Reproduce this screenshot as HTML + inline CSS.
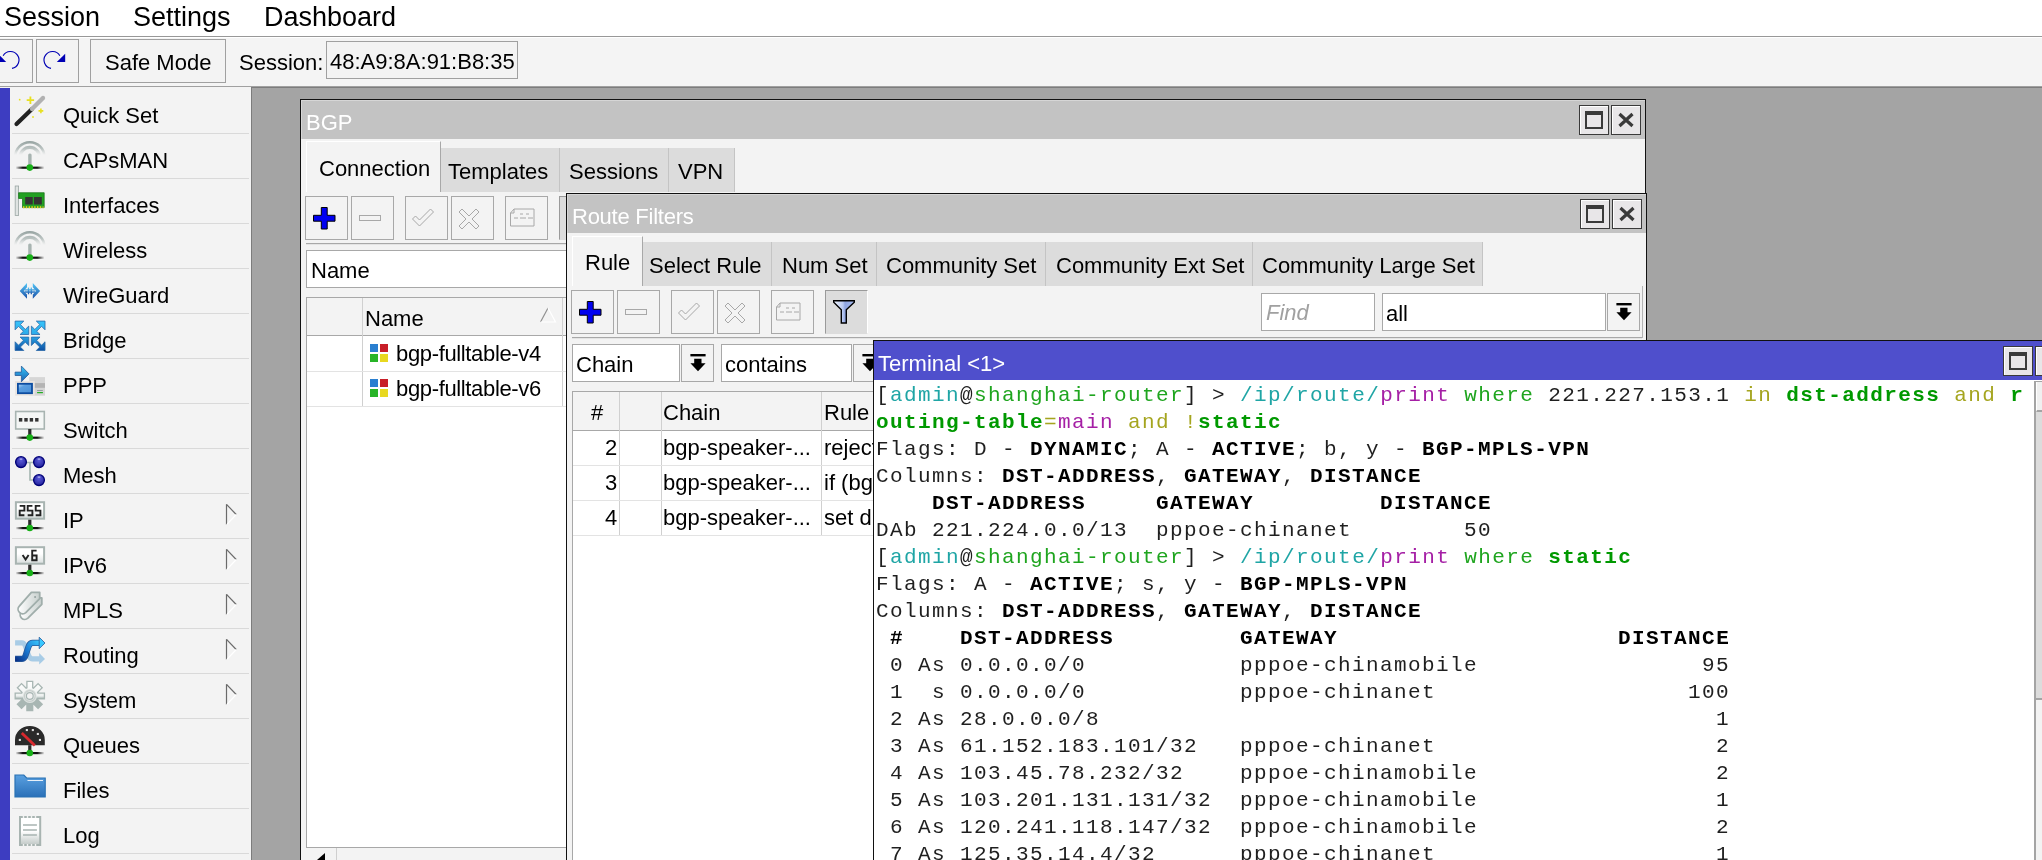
<!DOCTYPE html><html><head><meta charset="utf-8"><style>
html,body{margin:0;padding:0;}
body{width:2042px;height:860px;overflow:hidden;position:relative;background:#a4a4a4;font-family:"Liberation Sans", sans-serif;}
.t{position:absolute;white-space:pre;line-height:1;will-change:transform;}
.r{position:absolute;box-sizing:border-box;}
svg{position:absolute;overflow:visible;}
</style></head><body>
<div class="r" style="left:0px;top:0px;width:2042px;height:36px;background:#ffffff;"></div>
<div class="r" style="left:0px;top:36px;width:2042px;height:1px;background:#989898;"></div>
<div class="t" style="left:3.5px;top:4.0px;font-size:27px;color:#000;font-weight:400;font-family:'Liberation Sans', sans-serif;">Session</div>
<div class="t" style="left:132.5px;top:4.0px;font-size:27px;color:#000;font-weight:400;font-family:'Liberation Sans', sans-serif;">Settings</div>
<div class="t" style="left:264.0px;top:4.0px;font-size:27px;color:#000;font-weight:400;font-family:'Liberation Sans', sans-serif;">Dashboard</div>
<div class="r" style="left:0px;top:37px;width:2042px;height:49px;background:#f4f4f4;"></div>
<div class="r" style="left:0px;top:37px;width:2042px;height:1px;background:#ffffff;"></div>
<div class="r" style="left:0px;top:86px;width:2042px;height:1px;background:#a0a0a0;"></div>
<div class="r" style="left:-5px;top:39px;width:38px;height:44px;border:1px solid #a0a0a0;background:#f3f3f3;"></div>
<div class="r" style="left:36px;top:39px;width:43px;height:44px;border:1px solid #a0a0a0;background:#f3f3f3;"></div>
<svg style="left:0;top:0" width="80" height="90" viewBox="0 0 80 90"><path d="M12 68.4 A8.5 8.5 0 1 0 3.14 55.75" fill="none" stroke="#0000b4" stroke-width="1.15"/><path d="M-2.2 53.7 L-2.2 62 L6.2 62 Z" fill="#0000b4"/><path d="M51 68.4 A8.5 8.5 0 1 1 59.86 55.75" fill="none" stroke="#0000b4" stroke-width="1.15"/><path d="M65.2 53.7 L65.2 62 L56.8 62 Z" fill="#0000b4"/></svg>
<div class="r" style="left:90px;top:39px;width:136px;height:44px;border:1px solid #a0a0a0;background:#f3f3f3;"></div>
<div class="t" style="left:105.2px;top:51.5px;font-size:22px;color:#000;font-weight:400;font-family:'Liberation Sans', sans-serif;">Safe Mode</div>
<div class="t" style="left:239.1px;top:51.5px;font-size:22px;color:#000;font-weight:400;font-family:'Liberation Sans', sans-serif;">Session:</div>
<div class="r" style="left:326px;top:41px;width:192px;height:38px;border:1px solid #a0a0a0;background:#f3f3f3;"></div>
<div class="t" style="left:329.5px;top:51.0px;font-size:22px;color:#000;font-weight:400;font-family:'Liberation Sans', sans-serif;">48:A9:8A:91:B8:35</div>
<div class="r" style="left:251px;top:87px;width:1791px;height:1px;background:#7c7c7c;"></div>
<div class="r" style="left:251px;top:87px;width:1px;height:773px;background:#7c7c7c;"></div>
<div class="r" style="left:0px;top:87px;width:251px;height:773px;background:#f3f3f3;"></div>
<div class="r" style="left:0px;top:88px;width:10px;height:772px;background:#3d3dc1;"></div>
<div class="r" style="left:12px;top:133px;width:237px;height:1px;background:#d9d9d9;"></div>
<div class="t" style="left:63.2px;top:105.0px;font-size:22px;color:#000;font-weight:400;font-family:'Liberation Sans', sans-serif;">Quick Set</div>
<div class="r" style="left:12px;top:178px;width:237px;height:1px;background:#d9d9d9;"></div>
<div class="t" style="left:63.2px;top:150.0px;font-size:22px;color:#000;font-weight:400;font-family:'Liberation Sans', sans-serif;">CAPsMAN</div>
<div class="r" style="left:12px;top:223px;width:237px;height:1px;background:#d9d9d9;"></div>
<div class="t" style="left:63.2px;top:195.0px;font-size:22px;color:#000;font-weight:400;font-family:'Liberation Sans', sans-serif;">Interfaces</div>
<div class="r" style="left:12px;top:268px;width:237px;height:1px;background:#d9d9d9;"></div>
<div class="t" style="left:63.2px;top:240.0px;font-size:22px;color:#000;font-weight:400;font-family:'Liberation Sans', sans-serif;">Wireless</div>
<div class="r" style="left:12px;top:313px;width:237px;height:1px;background:#d9d9d9;"></div>
<div class="t" style="left:63.2px;top:285.0px;font-size:22px;color:#000;font-weight:400;font-family:'Liberation Sans', sans-serif;">WireGuard</div>
<div class="r" style="left:12px;top:358px;width:237px;height:1px;background:#d9d9d9;"></div>
<div class="t" style="left:63.2px;top:330.0px;font-size:22px;color:#000;font-weight:400;font-family:'Liberation Sans', sans-serif;">Bridge</div>
<div class="r" style="left:12px;top:403px;width:237px;height:1px;background:#d9d9d9;"></div>
<div class="t" style="left:63.2px;top:375.0px;font-size:22px;color:#000;font-weight:400;font-family:'Liberation Sans', sans-serif;">PPP</div>
<div class="r" style="left:12px;top:448px;width:237px;height:1px;background:#d9d9d9;"></div>
<div class="t" style="left:63.2px;top:420.0px;font-size:22px;color:#000;font-weight:400;font-family:'Liberation Sans', sans-serif;">Switch</div>
<div class="r" style="left:12px;top:493px;width:237px;height:1px;background:#d9d9d9;"></div>
<div class="t" style="left:63.2px;top:465.0px;font-size:22px;color:#000;font-weight:400;font-family:'Liberation Sans', sans-serif;">Mesh</div>
<div class="r" style="left:12px;top:538px;width:237px;height:1px;background:#d9d9d9;"></div>
<div class="t" style="left:63.2px;top:510.0px;font-size:22px;color:#000;font-weight:400;font-family:'Liberation Sans', sans-serif;">IP</div>
<svg style="left:222px;top:496px" width="20" height="34" viewBox="0 0 20 34"><path d="M4.5 8.3 V28.8" stroke="#6a6a6a" stroke-width="1.2" fill="none"/><path d="M4.5 8.3 L14.2 18.5" stroke="#6a6a6a" stroke-width="1.2" fill="none"/><path d="M14.2 18.5 L4.5 28.8" stroke="#ffffff" stroke-width="1.2" fill="none"/></svg>
<div class="r" style="left:12px;top:583px;width:237px;height:1px;background:#d9d9d9;"></div>
<div class="t" style="left:63.2px;top:555.0px;font-size:22px;color:#000;font-weight:400;font-family:'Liberation Sans', sans-serif;">IPv6</div>
<svg style="left:222px;top:541px" width="20" height="34" viewBox="0 0 20 34"><path d="M4.5 8.3 V28.8" stroke="#6a6a6a" stroke-width="1.2" fill="none"/><path d="M4.5 8.3 L14.2 18.5" stroke="#6a6a6a" stroke-width="1.2" fill="none"/><path d="M14.2 18.5 L4.5 28.8" stroke="#ffffff" stroke-width="1.2" fill="none"/></svg>
<div class="r" style="left:12px;top:628px;width:237px;height:1px;background:#d9d9d9;"></div>
<div class="t" style="left:63.2px;top:600.0px;font-size:22px;color:#000;font-weight:400;font-family:'Liberation Sans', sans-serif;">MPLS</div>
<svg style="left:222px;top:586px" width="20" height="34" viewBox="0 0 20 34"><path d="M4.5 8.3 V28.8" stroke="#6a6a6a" stroke-width="1.2" fill="none"/><path d="M4.5 8.3 L14.2 18.5" stroke="#6a6a6a" stroke-width="1.2" fill="none"/><path d="M14.2 18.5 L4.5 28.8" stroke="#ffffff" stroke-width="1.2" fill="none"/></svg>
<div class="r" style="left:12px;top:673px;width:237px;height:1px;background:#d9d9d9;"></div>
<div class="t" style="left:63.2px;top:645.0px;font-size:22px;color:#000;font-weight:400;font-family:'Liberation Sans', sans-serif;">Routing</div>
<svg style="left:222px;top:631px" width="20" height="34" viewBox="0 0 20 34"><path d="M4.5 8.3 V28.8" stroke="#6a6a6a" stroke-width="1.2" fill="none"/><path d="M4.5 8.3 L14.2 18.5" stroke="#6a6a6a" stroke-width="1.2" fill="none"/><path d="M14.2 18.5 L4.5 28.8" stroke="#ffffff" stroke-width="1.2" fill="none"/></svg>
<div class="r" style="left:12px;top:718px;width:237px;height:1px;background:#d9d9d9;"></div>
<div class="t" style="left:63.2px;top:690.0px;font-size:22px;color:#000;font-weight:400;font-family:'Liberation Sans', sans-serif;">System</div>
<svg style="left:222px;top:676px" width="20" height="34" viewBox="0 0 20 34"><path d="M4.5 8.3 V28.8" stroke="#6a6a6a" stroke-width="1.2" fill="none"/><path d="M4.5 8.3 L14.2 18.5" stroke="#6a6a6a" stroke-width="1.2" fill="none"/><path d="M14.2 18.5 L4.5 28.8" stroke="#ffffff" stroke-width="1.2" fill="none"/></svg>
<div class="r" style="left:12px;top:763px;width:237px;height:1px;background:#d9d9d9;"></div>
<div class="t" style="left:63.2px;top:735.0px;font-size:22px;color:#000;font-weight:400;font-family:'Liberation Sans', sans-serif;">Queues</div>
<div class="r" style="left:12px;top:808px;width:237px;height:1px;background:#d9d9d9;"></div>
<div class="t" style="left:63.2px;top:780.0px;font-size:22px;color:#000;font-weight:400;font-family:'Liberation Sans', sans-serif;">Files</div>
<div class="r" style="left:12px;top:853px;width:237px;height:1px;background:#d9d9d9;"></div>
<div class="t" style="left:63.2px;top:825.0px;font-size:22px;color:#000;font-weight:400;font-family:'Liberation Sans', sans-serif;">Log</div>
<svg style="left:10px;top:88px" width="45" height="45" viewBox="0 0 45 45"><path d="M6.5 36 L22 21" stroke="#222" stroke-width="4.2" stroke-linecap="round"/><path d="M22 21 L33 10" stroke="#c8c8c8" stroke-width="4.2" stroke-linecap="round"/><path d="M22 21 L33 10" stroke="#888" stroke-width="4.2" stroke-opacity="0.35" stroke-linecap="round"/><path d="M20.4 8.5 V16 M16.7 12.2 H24.1" stroke="#e8e020" stroke-width="1.8"/><path d="M30.9 20.5 V25.3 M28.5 22.9 H33.3" stroke="#e8e020" stroke-width="1.6"/><circle cx="9.7" cy="11.7" r="0.9" fill="#e8e020"/><circle cx="23" cy="29" r="0.9" fill="#e8e020"/></svg>
<svg style="left:10px;top:133px" width="45" height="45" viewBox="0 0 45 45"><defs><linearGradient id="arc1" gradientUnits="userSpaceOnUse" x1="0" y1="7" x2="0" y2="22"><stop offset="0" stop-color="#8e9c9a" stop-opacity="1"/><stop offset="0.6" stop-color="#a4b0ae" stop-opacity="0.7"/><stop offset="1" stop-color="#c0c8c6" stop-opacity="0"/></linearGradient></defs><path d="M5.3 23.7 A14.5 14.5 0 0 1 34.3 23.7" fill="none" stroke="url(#arc1)" stroke-width="2.6"/><path d="M10 24.2 A9.8 9.8 0 0 1 29.6 24.2" fill="none" stroke="url(#arc1)" stroke-width="3.2"/><rect x="18.2" y="20.5" width="3.4" height="14" rx="1.5" fill="#a8b4b1"/><defs><linearGradient id="ln1" x1="0" x2="1"><stop offset="0" stop-color="#000" stop-opacity="0"/><stop offset="0.25" stop-color="#111"/><stop offset="0.75" stop-color="#111"/><stop offset="1" stop-color="#000" stop-opacity="0"/></linearGradient></defs><rect x="18.2" y="34" width="3.2" height="0.6000000000000014" fill="#a8b4b1"/><rect x="5.5" y="33.6" width="29" height="2.2" fill="url(#ln1)"/><circle cx="19.8" cy="34.6" r="3.3" fill="#18b018"/></svg>
<svg style="left:10px;top:178px" width="45" height="45" viewBox="0 0 45 45"><rect x="5.2" y="8" width="3.4" height="29.4" fill="#dfe3e2" stroke="#9aa5a3" stroke-width="0.8"/><path d="M8.6 14.7 H34.2 V29.6 H12.5 V20.5 H8.6 Z" fill="#22a022" stroke="#137013" stroke-width="0.7"/><rect x="15.2" y="19" width="7.5" height="7.5" fill="#333"/><rect x="24" y="19" width="7.8" height="7.5" fill="#333"/><path d="M13 29.3 H33.5" stroke="#e6d21a" stroke-width="2" stroke-dasharray="1.4 1.4"/></svg>
<svg style="left:10px;top:223px" width="45" height="45" viewBox="0 0 45 45"><defs><linearGradient id="arc3" gradientUnits="userSpaceOnUse" x1="0" y1="7" x2="0" y2="22"><stop offset="0" stop-color="#8e9c9a" stop-opacity="1"/><stop offset="0.6" stop-color="#a4b0ae" stop-opacity="0.7"/><stop offset="1" stop-color="#c0c8c6" stop-opacity="0"/></linearGradient></defs><path d="M5.3 23.7 A14.5 14.5 0 0 1 34.3 23.7" fill="none" stroke="url(#arc3)" stroke-width="2.6"/><path d="M10 24.2 A9.8 9.8 0 0 1 29.6 24.2" fill="none" stroke="url(#arc3)" stroke-width="3.2"/><rect x="18.2" y="20.5" width="3.4" height="14" rx="1.5" fill="#a8b4b1"/><defs><linearGradient id="ln3" x1="0" x2="1"><stop offset="0" stop-color="#000" stop-opacity="0"/><stop offset="0.25" stop-color="#111"/><stop offset="0.75" stop-color="#111"/><stop offset="1" stop-color="#000" stop-opacity="0"/></linearGradient></defs><rect x="18.2" y="34" width="3.2" height="0.6000000000000014" fill="#a8b4b1"/><rect x="5.5" y="33.6" width="29" height="2.2" fill="url(#ln3)"/><circle cx="19.8" cy="34.6" r="3.3" fill="#18b018"/></svg>
<svg style="left:10px;top:268px" width="45" height="45" viewBox="0 0 45 45"><defs><linearGradient id="wg4" x1="0" y1="0" x2="0" y2="1"><stop offset="0" stop-color="#55c8f8"/><stop offset="1" stop-color="#1a50a8"/></linearGradient></defs><path d="M17 15 L9.7 22.9 L17 30.7 V26.5 L13.7 22.9 L17 19.3 Z" fill="url(#wg4)"/><path d="M22.8 15 L30.1 22.9 L22.8 30.7 V26.5 L26.1 22.9 L22.8 19.3 Z" fill="url(#wg4)"/><path d="M14.5 21.8 H25.3 M14.5 24 H25.3 M18.5 19.5 V26.3 M21.3 19.5 V26.3" stroke="url(#wg4)" stroke-width="1.3"/></svg>
<svg style="left:10px;top:313px" width="45" height="45" viewBox="0 0 45 45"><defs><linearGradient id="br5" gradientUnits="userSpaceOnUse" x1="0" y1="8" x2="0" y2="38"><stop offset="0" stop-color="#38c4fa"/><stop offset="0.5" stop-color="#2aa8e8"/><stop offset="1" stop-color="#0c4ca0"/></linearGradient><linearGradient id="bb5" gradientUnits="userSpaceOnUse" x1="0" y1="37.6" x2="0" y2="7.6"><stop offset="0" stop-color="#38c4fa"/><stop offset="0.5" stop-color="#2aa8e8"/><stop offset="1" stop-color="#0c4ca0"/></linearGradient></defs><g transform=""><path d="M5.1 8.1 L13.8 8.1 L10.37 11.53 L15.3 16.46 L18.75 13.1 L18.75 21.5 L10.1 21.5 L13.45 18.3 L8.53 13.37 L5.1 16.8 Z" fill="url(#br5)" stroke="#2a68a8" stroke-width="0.8" stroke-linejoin="miter"/></g><g transform="translate(40.12,0) scale(-1,1)"><path d="M5.1 8.1 L13.8 8.1 L10.37 11.53 L15.3 16.46 L18.75 13.1 L18.75 21.5 L10.1 21.5 L13.45 18.3 L8.53 13.37 L5.1 16.8 Z" fill="url(#br5)" stroke="#2a68a8" stroke-width="0.8" stroke-linejoin="miter"/></g><g transform="translate(0,45.6) scale(1,-1)"><path d="M5.1 8.1 L13.8 8.1 L10.37 11.53 L15.3 16.46 L18.75 13.1 L18.75 21.5 L10.1 21.5 L13.45 18.3 L8.53 13.37 L5.1 16.8 Z" fill="url(#bb5)" stroke="#2a68a8" stroke-width="0.8" stroke-linejoin="miter"/></g><g transform="translate(40.12,45.6) scale(-1,-1)"><path d="M5.1 8.1 L13.8 8.1 L10.37 11.53 L15.3 16.46 L18.75 13.1 L18.75 21.5 L10.1 21.5 L13.45 18.3 L8.53 13.37 L5.1 16.8 Z" fill="url(#bb5)" stroke="#2a68a8" stroke-width="0.8" stroke-linejoin="miter"/></g></svg>
<svg style="left:10px;top:358px" width="45" height="45" viewBox="0 0 45 45"><defs><linearGradient id="pp6" x1="0" y1="0" x2="0" y2="1"><stop offset="0" stop-color="#38c8fa"/><stop offset="1" stop-color="#1a60b0"/></linearGradient><linearGradient id="ps6" x1="0" y1="0" x2="1" y2="1"><stop offset="0" stop-color="#a8d0f8"/><stop offset="0.3" stop-color="#5a9ee0"/><stop offset="1" stop-color="#4a90d8"/></linearGradient></defs><rect x="19.3" y="19.1" width="15.7" height="18.6" fill="#d6d6d6"/><rect x="19.3" y="25.1" width="15.7" height="4.7" fill="#b4b4b4"/><path d="M27.1 32.5 H32.9" stroke="#8a9896" stroke-width="0.9"/><path d="M27.1 34.6 H32.9" stroke="#22b022" stroke-width="1.2"/><rect x="5.1" y="23" width="19.7" height="14.7" fill="#e8e4e0"/><rect x="7" y="24.9" width="15.9" height="11.2" fill="#0c4ca0"/><rect x="8.8" y="26.7" width="12.3" height="7.6" fill="url(#ps6)"/><path d="M5.1 14.1 H11.4 V8.1 L19 15.9 L11.4 23.8 V17.5 H5.1 Z" fill="url(#pp6)" stroke="#2a5a98" stroke-width="0.8"/></svg>
<svg style="left:10px;top:403px" width="45" height="45" viewBox="0 0 45 45"><rect x="5.7" y="8.5" width="28.6" height="17.5" fill="#f4f6f5" stroke="#a8b4b1" stroke-width="1.6"/><rect x="8.9" y="15" width="3.4" height="3.6" fill="#333"/><rect x="14.3" y="15" width="3.4" height="3.6" fill="#333"/><rect x="19.7" y="15" width="3.4" height="3.6" fill="#333"/><rect x="25.1" y="15" width="3.4" height="3.6" fill="#333"/><defs><linearGradient id="ln7" x1="0" x2="1"><stop offset="0" stop-color="#000" stop-opacity="0"/><stop offset="0.25" stop-color="#111"/><stop offset="0.75" stop-color="#111"/><stop offset="1" stop-color="#000" stop-opacity="0"/></linearGradient></defs><rect x="18.2" y="26" width="3.2" height="8.600000000000001" fill="#2a2a2a"/><rect x="5.5" y="33.6" width="29" height="2.2" fill="url(#ln7)"/><circle cx="19.8" cy="34.6" r="3.3" fill="#18b018"/></svg>
<svg style="left:10px;top:448px" width="45" height="45" viewBox="0 0 45 45"><path d="M15 14.5 H25 M20 14.5 V32 H25" stroke="#a8b8b4" stroke-width="1.7" fill="none"/><defs><radialGradient id="ms8" cx="0.5" cy="0.35" r="0.6"><stop offset="0" stop-color="#5a5ad8"/><stop offset="1" stop-color="#2626a0"/></radialGradient></defs><circle cx="11" cy="14.1" r="5.4" fill="url(#ms8)" stroke="#000078" stroke-width="1.3"/><ellipse cx="11" cy="11.1" rx="1.6" ry="0.9" fill="#b8b8f0" opacity="0.8"/><circle cx="29" cy="14.1" r="5.4" fill="url(#ms8)" stroke="#000078" stroke-width="1.3"/><ellipse cx="29" cy="11.1" rx="1.6" ry="0.9" fill="#b8b8f0" opacity="0.8"/><circle cx="29" cy="32.1" r="5.4" fill="url(#ms8)" stroke="#000078" stroke-width="1.3"/><ellipse cx="29" cy="29.1" rx="1.6" ry="0.9" fill="#b8b8f0" opacity="0.8"/></svg>
<svg style="left:10px;top:493px" width="45" height="45" viewBox="0 0 45 45"><defs><linearGradient id="sg9" x1="0" y1="0" x2="0" y2="1"><stop offset="0.4" stop-color="#ffffff"/><stop offset="1" stop-color="#d8dedd"/></linearGradient></defs><rect x="5.9" y="9.2" width="28.2" height="16.5" fill="url(#sg9)" stroke="#a8b4b1" stroke-width="2"/><path d="M9.7 12.9 H14.399999999999999 V17.6 H9.7 V22.3 H14.399999999999999 M22.4 12.9 H17.7 V17.6 H22.4 V22.3 H17.7 M30.4 12.9 H25.7 V17.6 H30.4 V22.3 H25.7 " fill="none" stroke="#222" stroke-width="1.9"/><defs><linearGradient id="ln9" x1="0" x2="1"><stop offset="0" stop-color="#000" stop-opacity="0"/><stop offset="0.25" stop-color="#111"/><stop offset="0.75" stop-color="#111"/><stop offset="1" stop-color="#000" stop-opacity="0"/></linearGradient></defs><rect x="18.2" y="26.7" width="3.2" height="8.3" fill="#2a2a2a"/><rect x="5.5" y="34" width="29" height="2.2" fill="url(#ln9)"/><circle cx="19.8" cy="35" r="3.3" fill="#18b018"/></svg>
<svg style="left:10px;top:538px" width="45" height="45" viewBox="0 0 45 45"><defs><linearGradient id="sg10" x1="0" y1="0" x2="0" y2="1"><stop offset="0.4" stop-color="#ffffff"/><stop offset="1" stop-color="#d8dedd"/></linearGradient></defs><rect x="5.9" y="9.2" width="28.2" height="16.5" fill="url(#sg10)" stroke="#a8b4b1" stroke-width="2"/><path d="M12.6 17 L15.6 21.6 L18.6 17" fill="none" stroke="#222" stroke-width="1.9"/><path d="M26.6 12.6 H22.2 V22.2 H26.6 V17.5 H22.2" fill="none" stroke="#222" stroke-width="1.9"/><defs><linearGradient id="ln10" x1="0" x2="1"><stop offset="0" stop-color="#000" stop-opacity="0"/><stop offset="0.25" stop-color="#111"/><stop offset="0.75" stop-color="#111"/><stop offset="1" stop-color="#000" stop-opacity="0"/></linearGradient></defs><rect x="18.2" y="26.7" width="3.2" height="8.3" fill="#2a2a2a"/><rect x="5.5" y="34" width="29" height="2.2" fill="url(#ln10)"/><circle cx="19.8" cy="35" r="3.3" fill="#18b018"/></svg>
<svg style="left:10px;top:583px" width="45" height="45" viewBox="0 0 45 45"><defs><linearGradient id="mp11" x1="0" y1="0" x2="1" y2="0"><stop offset="0" stop-color="#ffffff"/><stop offset="1" stop-color="#c8d0ce"/></linearGradient></defs><path transform="translate(2.1,5.6)" d="M21.4 9.3 H29.7 V15.7 L15.8 29.6 A4.6 4.6 0 0 1 9.3 23.1 Z" fill="url(#mp11)" stroke="#a0aeab" stroke-width="1.8" stroke-linejoin="round"/><path transform="translate(0,0)" d="M21.4 9.3 H29.7 V15.7 L15.8 29.6 A4.6 4.6 0 0 1 9.3 23.1 Z" fill="url(#mp11)" stroke="#a0aeab" stroke-width="1.8" stroke-linejoin="round"/><rect x="24.3" y="13.2" width="1.6" height="1.6" fill="#8a9896"/></svg>
<svg style="left:10px;top:628px" width="45" height="45" viewBox="0 0 45 45"><defs><linearGradient id="rt12" gradientUnits="userSpaceOnUse" x1="5" y1="33" x2="30" y2="13"><stop offset="0" stop-color="#082a80"/><stop offset="0.5" stop-color="#1a78d0"/><stop offset="1" stop-color="#38c8ff"/></linearGradient></defs><path d="M5.1 14.9 H12 C17.5 14.9 16.5 30.9 22.5 30.9 H29.8" fill="none" stroke="#a8cce6" stroke-width="5.2"/><path d="M29.2 25 L35 30.9 L29.2 36.6 Z" fill="#a8cce6"/><path d="M5.1 30.9 H12 C17.5 30.9 16.5 14.9 22.5 14.9 H29.8" fill="none" stroke="#2a5a9a" stroke-width="6.2"/><path d="M5.1 30.9 H12 C17.5 30.9 16.5 14.9 22.5 14.9 H29.8" fill="none" stroke="url(#rt12)" stroke-width="4.6"/><path d="M29.2 9.2 L35 15 L29.2 20.7 Z" fill="#38c8ff" stroke="#2a5a9a" stroke-width="0.8"/></svg>
<svg style="left:10px;top:673px" width="45" height="45" viewBox="0 0 45 45"><defs><linearGradient id="gr13" gradientUnits="userSpaceOnUse" x1="0" y1="8" x2="0" y2="38"><stop offset="0" stop-color="#ffffff"/><stop offset="0.5" stop-color="#eef1f0"/><stop offset="0.58" stop-color="#a8b6b3"/><stop offset="1" stop-color="#a8b6b3"/></linearGradient><radialGradient id="gh13" cx="0.5" cy="0.5" r="0.5"><stop offset="0.5" stop-color="#ffffff"/><stop offset="0.75" stop-color="#c4ccca"/><stop offset="1" stop-color="#e8ecea"/></radialGradient></defs><path d="M16.90 14.90 L16.90 8.38 L22.70 8.38 L22.70 14.90 L23.47 15.22 L28.08 10.61 L32.19 14.72 L27.58 19.33 L27.90 20.10 L34.42 20.10 L34.42 25.90 L27.90 25.90 L27.58 26.67 L32.19 31.28 L28.08 35.39 L23.47 30.78 L22.70 31.10 L22.70 37.62 L16.90 37.62 L16.90 31.10 L16.13 30.78 L11.52 35.39 L7.41 31.28 L12.02 26.67 L11.70 25.90 L5.18 25.90 L5.18 20.10 L11.70 20.10 L12.02 19.33 L7.41 14.72 L11.52 10.61 L16.13 15.22 Z" fill="url(#gr13)" stroke="#a8b6b3" stroke-width="1.3" stroke-linejoin="miter"/><circle cx="19.8" cy="23" r="7" fill="url(#gh13)"/><circle cx="19.8" cy="23" r="3.4" fill="#f3f3f3" stroke="#a8b6b3" stroke-width="1.2"/></svg>
<svg style="left:10px;top:718px" width="45" height="45" viewBox="0 0 45 45"><path d="M5 27.2 V22 A14.9 14 0 0 1 34.8 22 V27.2 Z" fill="#2a2a2a"/><rect x="8.8" y="20.9" width="2.1" height="2.1" fill="#ddd"/><rect x="15.8" y="11" width="2.1" height="2.1" fill="#ddd"/><rect x="21.8" y="11" width="2.1" height="2.1" fill="#ddd"/><rect x="26.8" y="14.9" width="2.1" height="2.1" fill="#ddd"/><rect x="28.9" y="20.9" width="2.1" height="2.1" fill="#ddd"/><path d="M11.8 14.9 L24.8 27.6" stroke="#d8282e" stroke-width="2.8"/><defs><linearGradient id="ln14" x1="0" x2="1"><stop offset="0" stop-color="#000" stop-opacity="0"/><stop offset="0.25" stop-color="#111"/><stop offset="0.75" stop-color="#111"/><stop offset="1" stop-color="#000" stop-opacity="0"/></linearGradient></defs><rect x="18.2" y="27.2" width="3.2" height="7.800000000000001" fill="#2a2a2a"/><rect x="5.5" y="34" width="29" height="2.2" fill="url(#ln14)"/><circle cx="19.8" cy="35" r="3.3" fill="#18b018"/></svg>
<svg style="left:10px;top:763px" width="45" height="45" viewBox="0 0 45 45"><defs><linearGradient id="fl15" x1="0" y1="0" x2="0" y2="1"><stop offset="0" stop-color="#5aa0e0"/><stop offset="1" stop-color="#2a70b8"/></linearGradient></defs><path d="M5 12 H13.8 L16.6 15 H35.2 V34 H5 Z" fill="url(#fl15)" stroke="#2a72b4" stroke-width="1.2"/><path d="M17.5 17.5 H33" stroke="#e8f0f8" stroke-width="1"/></svg>
<svg style="left:10px;top:808px" width="45" height="45" viewBox="0 0 45 45"><defs><linearGradient id="lg16" x1="0" y1="0" x2="0" y2="1"><stop offset="0.5" stop-color="#ffffff"/><stop offset="1" stop-color="#c0c8c6"/></linearGradient></defs><rect x="10" y="9" width="20.2" height="28" fill="url(#lg16)" stroke="#a8b4b1" stroke-width="2"/><path d="M12.8 9 H14.2 M16.8 9 H18.2 M20.8 9 H22.2 M24.8 9 H26.2 M12.8 37 H14.2 M16.8 37 H18.2 M20.8 37 H22.2 M24.8 37 H26.2" stroke="#f3f3f3" stroke-width="2.2"/><path d="M13 17 H26.9 M13 21.9 H26.9 M13 26.9 H26.9" stroke="#a8b4b1" stroke-width="1.5"/></svg>
<div class="r" style="left:300px;top:99px;width:1346px;height:771px;border:1px solid #111;background:#f3f3f3;"></div>
<div class="r" style="left:301px;top:100px;width:1344px;height:38.5px;background:#c3c3c3;border-top:1px solid #d6d6d6;border-left:1px solid #d6d6d6;"></div>
<div class="t" style="left:305.8px;top:111.7px;font-size:22px;color:#ffffff;font-weight:400;font-family:'Liberation Sans', sans-serif;">BGP</div>
<div class="r" style="left:1578.5px;top:105px;width:30px;height:30px;border:1px solid #3a3a3a;background:#e8e6e8;box-shadow:inset 1px 1px 0 #fff;"></div>
<div class="r" style="left:1584.5px;top:111px;width:18px;height:18px;border:2px solid #3a3a3a;border-top-width:4px;"></div>
<div class="r" style="left:1611.0px;top:105px;width:30px;height:30px;border:1px solid #3a3a3a;background:#e8e6e8;box-shadow:inset 1px 1px 0 #fff;"></div>
<svg style="left:1611.0px;top:105px" width="30" height="30" viewBox="0 0 30 30"><path d="M8.5 9 L21.5 21 M21.5 9 L8.5 21" stroke="#3a3a3a" stroke-width="3.2"/></svg>
<div class="r" style="left:306px;top:141px;width:135px;height:51px;background:#f3f3f3;border-top:1px solid #fff;border-left:1px solid #fff;border-right:1px solid #a8a8a8;"></div>
<div class="t" style="left:318.5px;top:158.0px;font-size:22px;color:#000;font-weight:400;font-family:'Liberation Sans', sans-serif;">Connection</div>
<div class="r" style="left:441px;top:148px;width:119px;height:44px;background:#dcdcdc;border-right:1px solid #c4c4c4;"></div>
<div class="t" style="left:447.9px;top:161.0px;font-size:22px;color:#000;font-weight:400;font-family:'Liberation Sans', sans-serif;">Templates</div>
<div class="r" style="left:560px;top:148px;width:109px;height:44px;background:#dcdcdc;border-right:1px solid #c4c4c4;"></div>
<div class="t" style="left:569.2px;top:161.0px;font-size:22px;color:#000;font-weight:400;font-family:'Liberation Sans', sans-serif;">Sessions</div>
<div class="r" style="left:669px;top:148px;width:65.5px;height:44px;background:#dcdcdc;border-right:1px solid #c4c4c4;"></div>
<div class="t" style="left:677.9px;top:161.0px;font-size:22px;color:#000;font-weight:400;font-family:'Liberation Sans', sans-serif;">VPN</div>
<div class="r" style="left:305px;top:196px;width:43px;height:44px;border:1px solid #a8a8a8;background:#f3f3f3;"></div>
<svg style="left:312.5px;top:206.5px" width="23" height="23" viewBox="0 0 23 23"><path d="M8.3 0.5 H14.2 V8.3 H22 V14.2 H14.2 V22 H8.3 V14.2 H0.5 V8.3 H8.3 Z" fill="#0000f0" stroke="#000" stroke-width="1"/></svg>
<div class="r" style="left:351px;top:196px;width:43px;height:44px;border:1px solid #a8a8a8;background:#f3f3f3;"></div>
<div class="r" style="left:359px;top:215px;width:21.5px;height:6px;border:1px solid #a8a8a8;"></div>
<div class="r" style="left:405px;top:196px;width:43px;height:44px;border:1px solid #a8a8a8;background:#f3f3f3;"></div>
<svg style="left:411.2px;top:206px" width="24" height="24" viewBox="0 0 24 24"><path d="M1.5 13 L4.5 10 L8.5 14 L19.5 3 L22.5 6 L8.5 20 Z" fill="none" stroke="#a8a8a8" stroke-width="1"/></svg>
<div class="r" style="left:451px;top:196px;width:43px;height:44px;border:1px solid #a8a8a8;background:#f3f3f3;"></div>
<svg style="left:456.5px;top:206.9px" width="24" height="24" viewBox="0 0 24 24"><path d="M5 2 L12 9 L19 2 L22 5 L15 12 L22 19 L19 22 L12 15 L5 22 L2 19 L9 12 L2 5 Z" fill="none" stroke="#a8a8a8" stroke-width="1"/></svg>
<div class="r" style="left:505px;top:196px;width:43px;height:44px;border:1px solid #a8a8a8;background:#f3f3f3;"></div>
<svg style="left:509.4px;top:205.9px" width="26" height="24" viewBox="0 0 26 24"><path d="M5 3 H25 V20 H1.5 V7 Z M1.5 7 H5 V3" fill="none" stroke="#a8a8a8" stroke-width="1"/><path d="M11 8 H14 M17 8 H20 M5 12 H9 M11 12 H17 M19 12 H24" stroke="#a8a8a8" stroke-width="1"/></svg>
<div class="r" style="left:559px;top:196px;width:41px;height:44px;border:1px solid #dcdcdc;border-left-color:#9a9a9a;border-top-color:#9a9a9a;border-right-color:#fff;background:#dcdcdc;"></div>
<div class="r" style="left:306px;top:243px;width:1334px;height:1px;background:#a8a8a8;"></div>
<div class="r" style="left:306px;top:244px;width:1334px;height:1px;background:#e4e4e4;"></div>
<div class="r" style="left:306px;top:250px;width:1334px;height:38px;border:1px solid #a8a8a8;background:#fff;"></div>
<div class="t" style="left:311.1px;top:260.0px;font-size:22px;color:#000;font-weight:400;font-family:'Liberation Sans', sans-serif;">Name</div>
<div class="r" style="left:306px;top:297px;width:1334px;height:573px;border:1px solid #a8a8a8;background:#fff;"></div>
<div class="r" style="left:307px;top:298px;width:1332px;height:38px;background:#f3f3f3;border-bottom:1px solid #a8a8a8;"></div>
<div class="r" style="left:362px;top:298px;width:1px;height:108px;background:#d0d0d0;"></div>
<div class="r" style="left:562px;top:298px;width:1px;height:108px;background:#d0d0d0;"></div>
<div class="t" style="left:365.0px;top:308.3px;font-size:22px;color:#000;font-weight:400;font-family:'Liberation Sans', sans-serif;">Name</div>
<svg style="left:538px;top:306px" width="20" height="18" viewBox="0 0 20 18"><path d="M2.5 16 L10 2" stroke="#909090" stroke-width="1.2"/><path d="M10 2 L17.5 16 L2.5 16" stroke="#ffffff" stroke-width="1.2" fill="none"/></svg>
<div class="r" style="left:307px;top:371px;width:1332px;height:1px;background:#e3e3e3;"></div>
<svg style="left:370px;top:344px" width="18" height="18" viewBox="0 0 18 18"><rect x="0" y="0" width="8" height="8" fill="#2a7fd0"/><rect x="10" y="0" width="8" height="8" fill="#c81e28"/><rect x="0" y="10" width="8" height="8" fill="#28b428"/><rect x="10" y="10" width="8" height="8" fill="#e8d820"/></svg>
<div class="t" style="left:396.0px;top:342.8px;font-size:22px;color:#000;font-weight:400;font-family:'Liberation Sans', sans-serif;letter-spacing:-0.35px;">bgp-fulltable-v4</div>
<div class="r" style="left:307px;top:406px;width:1332px;height:1px;background:#e3e3e3;"></div>
<svg style="left:370px;top:379px" width="18" height="18" viewBox="0 0 18 18"><rect x="0" y="0" width="8" height="8" fill="#2a7fd0"/><rect x="10" y="0" width="8" height="8" fill="#c81e28"/><rect x="0" y="10" width="8" height="8" fill="#28b428"/><rect x="10" y="10" width="8" height="8" fill="#e8d820"/></svg>
<div class="t" style="left:396.0px;top:377.8px;font-size:22px;color:#000;font-weight:400;font-family:'Liberation Sans', sans-serif;letter-spacing:-0.35px;">bgp-fulltable-v6</div>
<div class="r" style="left:306px;top:847px;width:1334px;height:23px;background:#f3f3f3;border-top:1px solid #a8a8a8;"></div>
<div class="r" style="left:336px;top:848px;width:1px;height:22px;background:#cfcfcf;"></div>
<svg style="left:312px;top:850px" width="20" height="20" viewBox="0 0 20 20"><path d="M5 10 L13 3 L13 17 Z" fill="#000"/></svg>
<div class="r" style="left:566px;top:193px;width:1081px;height:677px;border:1px solid #111;background:#f3f3f3;"></div>
<div class="r" style="left:567px;top:194px;width:1079px;height:38.5px;background:#c3c3c3;border-top:1px solid #d6d6d6;border-left:1px solid #d6d6d6;"></div>
<div class="t" style="left:572.0px;top:205.8px;font-size:22px;color:#ffffff;font-weight:400;font-family:'Liberation Sans', sans-serif;letter-spacing:-0.25px;">Route Filters</div>
<div class="r" style="left:1579.5px;top:199px;width:30px;height:30px;border:1px solid #3a3a3a;background:#e8e6e8;box-shadow:inset 1px 1px 0 #fff;"></div>
<div class="r" style="left:1585.5px;top:205px;width:18px;height:18px;border:2px solid #3a3a3a;border-top-width:4px;"></div>
<div class="r" style="left:1612.0px;top:199px;width:30px;height:30px;border:1px solid #3a3a3a;background:#e8e6e8;box-shadow:inset 1px 1px 0 #fff;"></div>
<svg style="left:1612.0px;top:199px" width="30" height="30" viewBox="0 0 30 30"><path d="M8.5 9 L21.5 21 M21.5 9 L8.5 21" stroke="#3a3a3a" stroke-width="3.2"/></svg>
<div class="r" style="left:572px;top:235.5px;width:70.60000000000002px;height:50.5px;background:#f3f3f3;border-top:1px solid #fff;border-left:1px solid #fff;border-right:1px solid #a8a8a8;"></div>
<div class="t" style="left:585.1px;top:252.0px;font-size:22px;color:#000;font-weight:400;font-family:'Liberation Sans', sans-serif;">Rule</div>
<div class="r" style="left:642.6px;top:241.5px;width:129.39999999999998px;height:44.5px;background:#dcdcdc;border-right:1px solid #c4c4c4;"></div>
<div class="t" style="left:649.4px;top:255.0px;font-size:22px;color:#000;font-weight:400;font-family:'Liberation Sans', sans-serif;">Select Rule</div>
<div class="r" style="left:772px;top:241.5px;width:105px;height:44.5px;background:#dcdcdc;border-right:1px solid #c4c4c4;"></div>
<div class="t" style="left:782.1px;top:255.0px;font-size:22px;color:#000;font-weight:400;font-family:'Liberation Sans', sans-serif;">Num Set</div>
<div class="r" style="left:877px;top:241.5px;width:169px;height:44.5px;background:#dcdcdc;border-right:1px solid #c4c4c4;"></div>
<div class="t" style="left:886.1px;top:255.0px;font-size:22px;color:#000;font-weight:400;font-family:'Liberation Sans', sans-serif;">Community Set</div>
<div class="r" style="left:1046px;top:241.5px;width:207px;height:44.5px;background:#dcdcdc;border-right:1px solid #c4c4c4;"></div>
<div class="t" style="left:1055.5px;top:255.0px;font-size:22px;color:#000;font-weight:400;font-family:'Liberation Sans', sans-serif;">Community Ext Set</div>
<div class="r" style="left:1253px;top:241.5px;width:230px;height:44.5px;background:#dcdcdc;border-right:1px solid #c4c4c4;"></div>
<div class="t" style="left:1262.2px;top:255.0px;font-size:22px;color:#000;font-weight:400;font-family:'Liberation Sans', sans-serif;">Community Large Set</div>
<div class="r" style="left:571px;top:290px;width:43px;height:44px;border:1px solid #a8a8a8;background:#f3f3f3;"></div>
<svg style="left:578.5px;top:300.5px" width="23" height="23" viewBox="0 0 23 23"><path d="M8.3 0.5 H14.2 V8.3 H22 V14.2 H14.2 V22 H8.3 V14.2 H0.5 V8.3 H8.3 Z" fill="#0000f0" stroke="#000" stroke-width="1"/></svg>
<div class="r" style="left:617px;top:290px;width:43px;height:44px;border:1px solid #a8a8a8;background:#f3f3f3;"></div>
<div class="r" style="left:625px;top:309px;width:21.5px;height:6px;border:1px solid #a8a8a8;"></div>
<div class="r" style="left:671px;top:290px;width:43px;height:44px;border:1px solid #a8a8a8;background:#f3f3f3;"></div>
<svg style="left:677.2px;top:300px" width="24" height="24" viewBox="0 0 24 24"><path d="M1.5 13 L4.5 10 L8.5 14 L19.5 3 L22.5 6 L8.5 20 Z" fill="none" stroke="#a8a8a8" stroke-width="1"/></svg>
<div class="r" style="left:717px;top:290px;width:43px;height:44px;border:1px solid #a8a8a8;background:#f3f3f3;"></div>
<svg style="left:722.5px;top:300.9px" width="24" height="24" viewBox="0 0 24 24"><path d="M5 2 L12 9 L19 2 L22 5 L15 12 L22 19 L19 22 L12 15 L5 22 L2 19 L9 12 L2 5 Z" fill="none" stroke="#a8a8a8" stroke-width="1"/></svg>
<div class="r" style="left:771px;top:290px;width:43px;height:44px;border:1px solid #a8a8a8;background:#f3f3f3;"></div>
<svg style="left:775.4px;top:299.9px" width="26" height="24" viewBox="0 0 26 24"><path d="M5 3 H25 V20 H1.5 V7 Z M1.5 7 H5 V3" fill="none" stroke="#a8a8a8" stroke-width="1"/><path d="M11 8 H14 M17 8 H20 M5 12 H9 M11 12 H17 M19 12 H24" stroke="#a8a8a8" stroke-width="1"/></svg>
<div class="r" style="left:825px;top:290px;width:43px;height:44px;border:1px solid #dcdcdc;border-left-color:#9a9a9a;border-top-color:#9a9a9a;border-right-color:#fff;background:#dcdcdc;"></div>
<svg style="left:833px;top:300px" width="23" height="25" viewBox="0 0 23 25"><defs><linearGradient id="fg" x1="0" x2="1"><stop offset="0" stop-color="#f4f8ff"/><stop offset="0.45" stop-color="#b8c8f0"/><stop offset="0.55" stop-color="#8ea4e0"/><stop offset="1" stop-color="#a8bcf0"/></linearGradient></defs><path d="M0.7 0.7 H21.3 V2.3 L13.3 9.8 V23 H8.3 V9.8 L0.7 2.3 Z" fill="url(#fg)" stroke="#000" stroke-width="1.4" stroke-linejoin="miter"/></svg>
<div class="r" style="left:1642px;top:286px;width:1px;height:52px;background:#b4b4b4;"></div>
<div class="r" style="left:572px;top:337px;width:1070px;height:1px;background:#a8a8a8;"></div>
<div class="r" style="left:572px;top:338px;width:1070px;height:1px;background:#e4e4e4;"></div>
<div class="r" style="left:1261px;top:293px;width:114px;height:38px;border:1px solid #a8a8a8;background:#fff;"></div>
<div class="t" style="left:1266.3px;top:301.6px;font-size:22px;color:#a0a0a0;font-weight:400;font-family:'Liberation Sans', sans-serif;font-style:italic;">Find</div>
<div class="r" style="left:1382px;top:293px;width:224px;height:38px;border:1px solid #a8a8a8;background:#fff;"></div>
<div class="t" style="left:1386.2px;top:302.6px;font-size:22px;color:#000;font-weight:400;font-family:'Liberation Sans', sans-serif;">all</div>
<div class="r" style="left:1607px;top:293px;width:33px;height:38px;border:1px solid #a8a8a8;background:#f3f3f3;"></div>
<svg style="left:1615.5px;top:303.0px" width="16" height="18" viewBox="0 0 16 18"><rect x="0.4" y="0" width="15.2" height="2.4" fill="#000"/><path d="M4.2 4.7 H11.5 V9.2 H15.6 L8 17.3 L0.4 9.2 H4.2 Z" fill="#000"/></svg>
<div class="r" style="left:572px;top:344px;width:108px;height:38px;border:1px solid #a8a8a8;background:#fff;"></div>
<div class="t" style="left:576.2px;top:353.6px;font-size:22px;color:#000;font-weight:400;font-family:'Liberation Sans', sans-serif;">Chain</div>
<div class="r" style="left:681px;top:344px;width:33px;height:38px;border:1px solid #a8a8a8;background:#f3f3f3;"></div>
<svg style="left:689.5px;top:354.0px" width="16" height="18" viewBox="0 0 16 18"><rect x="0.4" y="0" width="15.2" height="2.4" fill="#000"/><path d="M4.2 4.7 H11.5 V9.2 H15.6 L8 17.3 L0.4 9.2 H4.2 Z" fill="#000"/></svg>
<div class="r" style="left:721px;top:344px;width:131px;height:38px;border:1px solid #a8a8a8;background:#fff;"></div>
<div class="t" style="left:725.0px;top:353.6px;font-size:22px;color:#000;font-weight:400;font-family:'Liberation Sans', sans-serif;">contains</div>
<div class="r" style="left:853px;top:344px;width:33px;height:38px;border:1px solid #a8a8a8;background:#f3f3f3;"></div>
<svg style="left:861.5px;top:354.0px" width="16" height="18" viewBox="0 0 16 18"><rect x="0.4" y="0" width="15.2" height="2.4" fill="#000"/><path d="M4.2 4.7 H11.5 V9.2 H15.6 L8 17.3 L0.4 9.2 H4.2 Z" fill="#000"/></svg>
<div class="r" style="left:572px;top:391px;width:1070px;height:479px;border:1px solid #a8a8a8;background:#fff;"></div>
<div class="r" style="left:573px;top:392px;width:1068px;height:39px;background:#f3f3f3;border-bottom:1px solid #a8a8a8;"></div>
<div class="r" style="left:619px;top:392px;width:1px;height:143px;background:#d0d0d0;"></div>
<div class="r" style="left:661px;top:392px;width:1px;height:143px;background:#d0d0d0;"></div>
<div class="r" style="left:821px;top:392px;width:1px;height:143px;background:#d0d0d0;"></div>
<div class="t" style="left:590.5px;top:401.8px;font-size:22px;color:#000;font-weight:400;font-family:'Liberation Sans', sans-serif;">#</div>
<div class="t" style="left:662.7px;top:401.8px;font-size:22px;color:#000;font-weight:400;font-family:'Liberation Sans', sans-serif;">Chain</div>
<div class="t" style="left:823.5px;top:401.8px;font-size:22px;color:#000;font-weight:400;font-family:'Liberation Sans', sans-serif;">Rule</div>
<div class="r" style="left:573px;top:465px;width:1068px;height:1px;background:#e3e3e3;"></div>
<div class="t" style="left:604.5px;top:437.0px;font-size:22px;color:#000;font-weight:400;font-family:'Liberation Sans', sans-serif;">2</div>
<div class="t" style="left:662.7px;top:437.0px;font-size:22px;color:#000;font-weight:400;font-family:'Liberation Sans', sans-serif;">bgp-speaker-...</div>
<div class="t" style="left:823.5px;top:437.0px;font-size:22px;color:#000;font-weight:400;font-family:'Liberation Sans', sans-serif;">reject</div>
<div class="r" style="left:573px;top:500px;width:1068px;height:1px;background:#e3e3e3;"></div>
<div class="t" style="left:604.5px;top:472.0px;font-size:22px;color:#000;font-weight:400;font-family:'Liberation Sans', sans-serif;">3</div>
<div class="t" style="left:662.7px;top:472.0px;font-size:22px;color:#000;font-weight:400;font-family:'Liberation Sans', sans-serif;">bgp-speaker-...</div>
<div class="t" style="left:823.5px;top:472.0px;font-size:22px;color:#000;font-weight:400;font-family:'Liberation Sans', sans-serif;">if (bgp</div>
<div class="r" style="left:573px;top:535px;width:1068px;height:1px;background:#e3e3e3;"></div>
<div class="t" style="left:604.5px;top:507.0px;font-size:22px;color:#000;font-weight:400;font-family:'Liberation Sans', sans-serif;">4</div>
<div class="t" style="left:662.7px;top:507.0px;font-size:22px;color:#000;font-weight:400;font-family:'Liberation Sans', sans-serif;">bgp-speaker-...</div>
<div class="t" style="left:823.5px;top:507.0px;font-size:22px;color:#000;font-weight:400;font-family:'Liberation Sans', sans-serif;">set dis</div>
<div class="r" style="left:873px;top:340px;width:1177px;height:530px;border:1px solid #111;background:#fff;"></div>
<div class="r" style="left:874px;top:341px;width:1176px;height:39px;background:#4f4fcc;"></div>
<div class="t" style="left:877.7px;top:353.0px;font-size:22px;color:#ffffff;font-weight:400;font-family:'Liberation Sans', sans-serif;">Terminal &lt;1&gt;</div>
<div class="r" style="left:2003px;top:346px;width:30px;height:30px;border:1px solid #3a3a3a;background:#e8e6e8;box-shadow:inset 1px 1px 0 #fff;"></div>
<div class="r" style="left:2009px;top:352px;width:18px;height:18px;border:2px solid #3a3a3a;border-top-width:4px;"></div>
<div class="r" style="left:2035px;top:346px;width:30px;height:30px;border:1px solid #3a3a3a;background:#e8e6e8;box-shadow:inset 1px 1px 0 #fff;"></div>
<div class="r" style="left:2034px;top:381px;width:8px;height:479px;background:#f3f3f3;border-left:2px solid #a4a4a4;border-top:1px solid #a4a4a4;"></div>
<div class="r" style="left:2036px;top:382px;width:6px;height:30px;background:#f0f0f0;border-left:1px solid #fff;border-bottom:2px solid #a4a4a4;"></div>
<div class="r" style="left:2036px;top:412px;width:6px;height:288px;background:#dcdcdc;border-bottom:2px solid #a4a4a4;"></div>
<div style="position:absolute;left:875.5px;top:0;width:1158px;height:860px;overflow:hidden;">
<div class="t" style="left:0;top:385px;font-family:'Liberation Mono',monospace;font-size:21px;letter-spacing:1.40px;"><span style="color:#1f1f1f;">[</span><span style="color:#1fa5a5;">admin</span><span style="color:#1f1f1f;">@</span><span style="color:#1fa51f;">shanghai-router</span><span style="color:#1f1f1f;">]</span><span style="color:#1f1f1f;"> &gt; </span><span style="color:#1fa5a5;">/ip/route/</span><span style="color:#a51fa5;">print</span><span style="color:#1fa51f;"> where </span><span style="color:#1f1f1f;">221.227.153.1</span><span style="color:#a5a51f;"> in </span><span style="color:#009900;font-weight:700;">dst-address</span><span style="color:#a5a51f;"> and </span><span style="color:#009900;font-weight:700;">r</span></div>
<div class="t" style="left:0;top:412px;font-family:'Liberation Mono',monospace;font-size:21px;letter-spacing:1.40px;"><span style="color:#009900;font-weight:700;">outing-table</span><span style="color:#a5a51f;">=</span><span style="color:#a51fa5;">main</span><span style="color:#a5a51f;"> and </span><span style="color:#a5a51f;">!</span><span style="color:#009900;font-weight:700;">static</span></div>
<div class="t" style="left:0;top:439px;font-family:'Liberation Mono',monospace;font-size:21px;letter-spacing:1.40px;"><span style="color:#1f1f1f;">Flags: D - </span><span style="color:#000000;font-weight:700;">DYNAMIC</span><span style="color:#1f1f1f;">; A - </span><span style="color:#000000;font-weight:700;">ACTIVE</span><span style="color:#1f1f1f;">; b, y - </span><span style="color:#000000;font-weight:700;">BGP-MPLS-VPN</span></div>
<div class="t" style="left:0;top:466px;font-family:'Liberation Mono',monospace;font-size:21px;letter-spacing:1.40px;"><span style="color:#1f1f1f;">Columns: </span><span style="color:#000000;font-weight:700;">DST-ADDRESS</span><span style="color:#1f1f1f;">, </span><span style="color:#000000;font-weight:700;">GATEWAY</span><span style="color:#1f1f1f;">, </span><span style="color:#000000;font-weight:700;">DISTANCE</span></div>
<div class="t" style="left:0;top:493px;font-family:'Liberation Mono',monospace;font-size:21px;letter-spacing:1.40px;"><span style="color:#1f1f1f;">    </span><span style="color:#000000;font-weight:700;">DST-ADDRESS     GATEWAY         DISTANCE</span></div>
<div class="t" style="left:0;top:520px;font-family:'Liberation Mono',monospace;font-size:21px;letter-spacing:1.40px;"><span style="color:#1f1f1f;">DAb 221.224.0.0/13  pppoe-chinanet        50</span></div>
<div class="t" style="left:0;top:547px;font-family:'Liberation Mono',monospace;font-size:21px;letter-spacing:1.40px;"><span style="color:#1f1f1f;">[</span><span style="color:#1fa5a5;">admin</span><span style="color:#1f1f1f;">@</span><span style="color:#1fa51f;">shanghai-router</span><span style="color:#1f1f1f;">]</span><span style="color:#1f1f1f;"> &gt; </span><span style="color:#1fa5a5;">/ip/route/</span><span style="color:#a51fa5;">print</span><span style="color:#1fa51f;"> where </span><span style="color:#009900;font-weight:700;">static</span></div>
<div class="t" style="left:0;top:574px;font-family:'Liberation Mono',monospace;font-size:21px;letter-spacing:1.40px;"><span style="color:#1f1f1f;">Flags: A - </span><span style="color:#000000;font-weight:700;">ACTIVE</span><span style="color:#1f1f1f;">; s, y - </span><span style="color:#000000;font-weight:700;">BGP-MPLS-VPN</span></div>
<div class="t" style="left:0;top:601px;font-family:'Liberation Mono',monospace;font-size:21px;letter-spacing:1.40px;"><span style="color:#1f1f1f;">Columns: </span><span style="color:#000000;font-weight:700;">DST-ADDRESS</span><span style="color:#1f1f1f;">, </span><span style="color:#000000;font-weight:700;">GATEWAY</span><span style="color:#1f1f1f;">, </span><span style="color:#000000;font-weight:700;">DISTANCE</span></div>
<div class="t" style="left:0;top:628px;font-family:'Liberation Mono',monospace;font-size:21px;letter-spacing:1.40px;"><span style="color:#000000;font-weight:700;"> #    </span><span style="color:#000000;font-weight:700;">DST-ADDRESS         GATEWAY                    DISTANCE</span></div>
<div class="t" style="left:0;top:655px;font-family:'Liberation Mono',monospace;font-size:21px;letter-spacing:1.40px;"><span style="color:#1f1f1f;"> 0 As 0.0.0.0/0           pppoe-chinamobile                95</span></div>
<div class="t" style="left:0;top:682px;font-family:'Liberation Mono',monospace;font-size:21px;letter-spacing:1.40px;"><span style="color:#1f1f1f;"> 1  s 0.0.0.0/0           pppoe-chinanet                  100</span></div>
<div class="t" style="left:0;top:709px;font-family:'Liberation Mono',monospace;font-size:21px;letter-spacing:1.40px;"><span style="color:#1f1f1f;"> 2 As 28.0.0.0/8                                            1</span></div>
<div class="t" style="left:0;top:736px;font-family:'Liberation Mono',monospace;font-size:21px;letter-spacing:1.40px;"><span style="color:#1f1f1f;"> 3 As 61.152.183.101/32   pppoe-chinanet                    2</span></div>
<div class="t" style="left:0;top:763px;font-family:'Liberation Mono',monospace;font-size:21px;letter-spacing:1.40px;"><span style="color:#1f1f1f;"> 4 As 103.45.78.232/32    pppoe-chinamobile                 2</span></div>
<div class="t" style="left:0;top:790px;font-family:'Liberation Mono',monospace;font-size:21px;letter-spacing:1.40px;"><span style="color:#1f1f1f;"> 5 As 103.201.131.131/32  pppoe-chinamobile                 1</span></div>
<div class="t" style="left:0;top:817px;font-family:'Liberation Mono',monospace;font-size:21px;letter-spacing:1.40px;"><span style="color:#1f1f1f;"> 6 As 120.241.118.147/32  pppoe-chinamobile                 2</span></div>
<div class="t" style="left:0;top:844px;font-family:'Liberation Mono',monospace;font-size:21px;letter-spacing:1.40px;"><span style="color:#1f1f1f;"> 7 As 125.35.14.4/32      pppoe-chinanet                    1</span></div>
</div>
</body></html>
